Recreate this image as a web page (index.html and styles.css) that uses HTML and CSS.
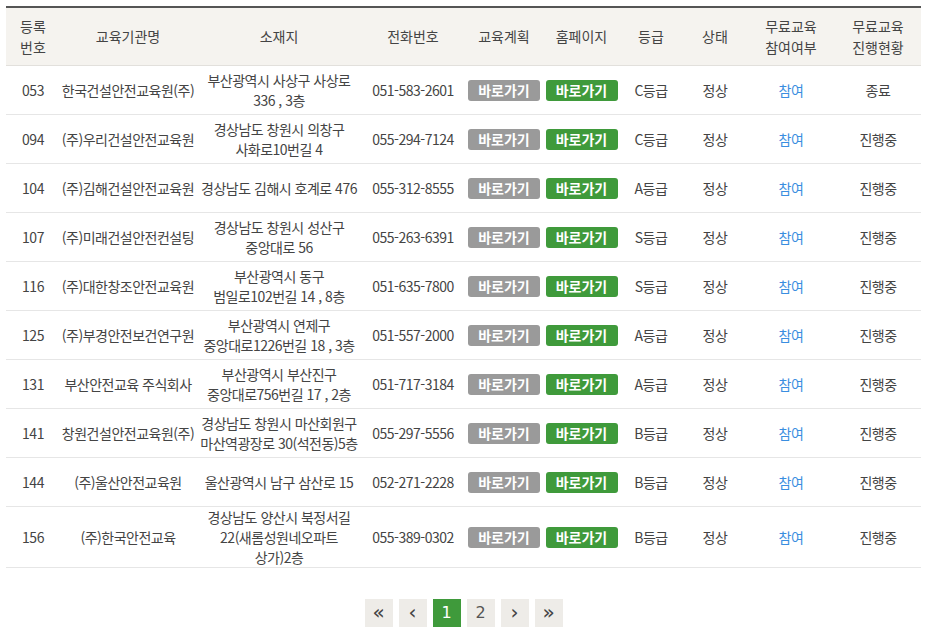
FILE: index.html
```html
<!DOCTYPE html>
<html lang="ko">
<head>
<meta charset="utf-8">
<link rel="stylesheet" href="styles.css">
</head>
<body>
<div class="wrap">
<table class="list">
<colgroup>
<col class="c1"><col class="c2"><col class="c3"><col class="c4"><col class="c5"><col class="c6"><col class="c7"><col class="c8"><col class="c9"><col class="c10">
</colgroup>
<thead>
<tr>
<th>등록<br>번호</th><th>교육기관명</th><th>소재지</th><th>전화번호</th><th>교육계획</th><th>홈페이지</th><th>등급</th><th>상태</th><th>무료교육<br>참여여부</th><th>무료교육<br>진행현황</th>
</tr>
</thead>
<tbody>
<tr><td>053</td><td>한국건설안전교육원(주)</td><td>부산광역시 사상구 사상로<br>336 , 3층</td><td>051-583-2601</td><td><a class="btn gray">바로가기</a></td><td><a class="btn green">바로가기</a></td><td>C등급</td><td>정상</td><td><a class="link">참여</a></td><td>종료</td></tr>
<tr><td>094</td><td>(주)우리건설안전교육원</td><td>경상남도 창원시 의창구<br>사화로10번길 4</td><td>055-294-7124</td><td><a class="btn gray">바로가기</a></td><td><a class="btn green">바로가기</a></td><td>C등급</td><td>정상</td><td><a class="link">참여</a></td><td>진행중</td></tr>
<tr><td>104</td><td>(주)김해건설안전교육원</td><td>경상남도 김해시 호계로 476</td><td>055-312-8555</td><td><a class="btn gray">바로가기</a></td><td><a class="btn green">바로가기</a></td><td>A등급</td><td>정상</td><td><a class="link">참여</a></td><td>진행중</td></tr>
<tr><td>107</td><td>(주)미래건설안전컨설팅</td><td>경상남도 창원시 성산구<br>중앙대로 56</td><td>055-263-6391</td><td><a class="btn gray">바로가기</a></td><td><a class="btn green">바로가기</a></td><td>S등급</td><td>정상</td><td><a class="link">참여</a></td><td>진행중</td></tr>
<tr><td>116</td><td>(주)대한창조안전교육원</td><td>부산광역시 동구<br>범일로102번길 14 , 8층</td><td>051-635-7800</td><td><a class="btn gray">바로가기</a></td><td><a class="btn green">바로가기</a></td><td>S등급</td><td>정상</td><td><a class="link">참여</a></td><td>진행중</td></tr>
<tr><td>125</td><td>(주)부경안전보건연구원</td><td>부산광역시 연제구<br>중앙대로1226번길 18 , 3층</td><td>051-557-2000</td><td><a class="btn gray">바로가기</a></td><td><a class="btn green">바로가기</a></td><td>A등급</td><td>정상</td><td><a class="link">참여</a></td><td>진행중</td></tr>
<tr><td>131</td><td>부산안전교육 주식회사</td><td>부산광역시 부산진구<br>중앙대로756번길 17 , 2층</td><td>051-717-3184</td><td><a class="btn gray">바로가기</a></td><td><a class="btn green">바로가기</a></td><td>A등급</td><td>정상</td><td><a class="link">참여</a></td><td>진행중</td></tr>
<tr><td>141</td><td>창원건설안전교육원(주)</td><td>경상남도 창원시 마산회원구<br>마산역광장로 30(석전동)5층</td><td>055-297-5556</td><td><a class="btn gray">바로가기</a></td><td><a class="btn green">바로가기</a></td><td>B등급</td><td>정상</td><td><a class="link">참여</a></td><td>진행중</td></tr>
<tr><td>144</td><td>(주)울산안전교육원</td><td>울산광역시 남구 삼산로 15</td><td>052-271-2228</td><td><a class="btn gray">바로가기</a></td><td><a class="btn green">바로가기</a></td><td>B등급</td><td>정상</td><td><a class="link">참여</a></td><td>진행중</td></tr>
<tr><td>156</td><td>(주)한국안전교육</td><td>경상남도 양산시 북정서길<br>22(새롬성원네오파트<br>상가)2층</td><td>055-389-0302</td><td><a class="btn gray">바로가기</a></td><td><a class="btn green">바로가기</a></td><td>B등급</td><td>정상</td><td><a class="link">참여</a></td><td>진행중</td></tr>
</tbody>
</table>
<nav class="paging">
<a class="pg arrow">&laquo;</a>
<a class="pg arrow">&lsaquo;</a>
<a class="pg on">1</a>
<a class="pg">2</a>
<a class="pg arrow">&rsaquo;</a>
<a class="pg arrow">&raquo;</a>
</nav>
</div>
</body>
</html>
```
FILE: styles.css
```css
html, body {
  margin: 0;
  padding: 0;
  background: #fff;
}
body {
  font-family: "Noto Sans CJK KR", "Noto Sans", sans-serif;
  font-size: 14px;
  color: #444;
}
.wrap {
  padding: 6px 9px 0 6px;
}
.list {
  width: 915px;
  border-collapse: collapse;
  table-layout: fixed;
  border-top: 2px solid #555;
}
.c1 { width: 54px; }
.c2 { width: 136px; }
.c3 { width: 166px; }
.c4 { width: 102px; }
.c5 { width: 80px; }
.c6 { width: 75px; }
.c7 { width: 64px; }
.c8 { width: 64px; }
.c9 { width: 88px; }
.c10 { width: 86px; }
.list th {
  background: #f5f3ef;
  font-weight: normal;
  color: #444;
  height: 57px;
  padding: 0;
  line-height: 21px;
  border-bottom: 1px solid #e2e0dc;
  text-align: center;
  vertical-align: middle;
}
.list td {
  height: 48px;
  padding: 0;
  line-height: 20px;
  text-align: center;
  vertical-align: middle;
  border-bottom: 1px solid #e6e6e6;
  white-space: nowrap;
  letter-spacing: -0.5px;
}
.btn {
  display: inline-block;
  width: 72px;
  height: 21px;
  line-height: 21px;
  border-radius: 3px;
  color: #fff;
  font-weight: bold;
  font-size: 14px;
  letter-spacing: 0;
}
.gray { background: #9a9a9a; }
.green { background: #3f9a3b; }
.link { color: #3a8ee0; }
.paging {
  display: flex;
  justify-content: center;
  gap: 6px;
  margin-top: 31px;
}
.pg {
  width: 28px;
  height: 28px;
  line-height: 28px;
  text-align: center;
  background: #eeece8;
  color: #555;
  font-size: 16px;
  font-family: "DejaVu Sans", sans-serif;
}
.pg.arrow {
  font-size: 20px;
  line-height: 26px;
  color: #444;
}
.pg.on {
  background: #3f9a3b;
  color: #fff;
}
```
